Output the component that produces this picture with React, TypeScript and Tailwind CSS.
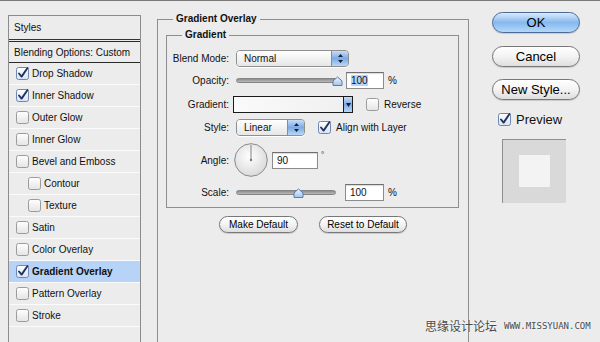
import React from 'react'

const styleItems = [
  { label: 'Drop Shadow', checked: true },
  { label: 'Inner Shadow', checked: true },
  { label: 'Outer Glow' },
  { label: 'Inner Glow' },
  { label: 'Bevel and Emboss' },
  { label: 'Contour', indent: true },
  { label: 'Texture', indent: true },
  { label: 'Satin' },
  { label: 'Color Overlay' },
  { label: 'Gradient Overlay', checked: true, selected: true },
  { label: 'Pattern Overlay' },
  { label: 'Stroke' },
]

function Defs() {
  return (
    <svg width="0" height="0" className="absolute">
      <defs>
        <linearGradient id="cbOff" x1="0" y1="0" x2="0" y2="1">
          <stop offset="0" stopColor="#ffffff" />
          <stop offset="1" stopColor="#e4e4e4" />
        </linearGradient>
        <linearGradient id="cbOn" x1="0" y1="0" x2="0" y2="1">
          <stop offset="0" stopColor="#ffffff" />
          <stop offset="1" stopColor="#d6e3f3" />
        </linearGradient>
        <linearGradient id="thumb" x1="0" y1="0" x2="0" y2="1">
          <stop offset="0" stopColor="#f4f8fd" />
          <stop offset="1" stopColor="#9fc2ec" />
        </linearGradient>
        <radialGradient id="dial" cx="0.45" cy="0.4" r="0.6">
          <stop offset="0" stopColor="#ffffff" />
          <stop offset="1" stopColor="#dadada" />
        </radialGradient>
      </defs>
    </svg>
  )
}

function Checkbox({ checked }: { checked?: boolean }) {
  return (
    <svg width="13" height="13" viewBox="0 0 13 13" className="shrink-0 overflow-visible">
      <rect x="0.5" y="0.5" width="12" height="12" rx="2" fill={checked ? 'url(#cbOn)' : 'url(#cbOff)'} stroke={checked ? '#6f86ad' : '#9b9b9b'} />
      {checked && <path d="M3 6.5 L5.6 9.6 L11.5 1" fill="none" stroke="#1f3363" strokeWidth="1.9" strokeLinecap="round" strokeLinejoin="round" />}
    </svg>
  )
}

function AquaSelect({ value, width }: { value: string; width: string }) {
  return (
    <div className={`${width} h-[17px] flex rounded-[4px] border border-[#8f8f8f] overflow-hidden shadow-[0_1px_0_#fff]`}>
      <div className="flex-1 bg-gradient-to-b from-white to-[#e6e6e6] pl-[7px] leading-[15px]">{value}</div>
      <div className="w-[17px] border-l border-[#6c8fc4] bg-gradient-to-b from-[#c8ddf6] via-[#7daae4] to-[#b9d7f7] flex items-center justify-center">
        <svg width="7" height="11" viewBox="0 0 7 11">
          <path d="M3.5 1 L6 4 H1 Z M3.5 10 L6 7 H1 Z" fill="#14213d" />
        </svg>
      </div>
    </div>
  )
}

function Slider({ width, thumb }: { width: string; thumb: number }) {
  return (
    <div className={`${width} h-[17px] relative flex items-center`}>
      <div className="w-full h-[5px] rounded-full bg-gradient-to-b from-[#8d8d8d] to-[#b9b9b9] border border-[#858585]" />
      <svg width="11" height="11" viewBox="0 0 11 11" className="absolute top-[4px]" style={{ left: thumb - 5 }}>
        <path d="M1 5 L5.5 1 L10 5 V9.5 H1 Z" fill="url(#thumb)" stroke="#5a7cae" strokeLinejoin="round" />
      </svg>
    </div>
  )
}

function Field({ children, width }: { children: React.ReactNode; width: string }) {
  return (
    <div className={`${width} h-[17px] bg-white border border-[#8c8c8c] border-t-[#6e6e6e] shadow-[inset_0_1px_1px_rgba(0,0,0,0.15)] pl-[4px] leading-[15px]`}>
      {children}
    </div>
  )
}

function Label({ children }: { children: React.ReactNode }) {
  return <div className="w-[62px] text-right shrink-0 mr-[7px]">{children}</div>
}

function PillButton({ children, width, primary, big }: { children: React.ReactNode; width: string; primary?: boolean; big?: boolean }) {
  const size = big ? 'h-[21px] text-[13px]' : 'h-[17px] text-[10px]'
  const skin = primary
    ? 'border-[#4c6a98] bg-gradient-to-b from-[#dcebfb] via-[#86b8ee] to-[#b4d8fa]'
    : 'border-[#777] bg-gradient-to-b from-white via-[#f3f3f3] to-[#dedede]'
  return (
    <div className={`${width} ${size} ${skin} rounded-full border flex items-center justify-center shadow-[0_1px_1px_rgba(0,0,0,0.15)] text-black`}>
      {children}
    </div>
  )
}

export default function App() {
  return (
    <div className="relative w-[600px] h-[342px] overflow-hidden bg-[#ececec] border-t border-[#7a7a7a] flex pl-[8px] text-[10px] text-[#111] font-['Liberation_Sans',Arial,sans-serif]">
      <Defs />

      {/* styles list */}
      <div className="mt-[14px] w-[133px] h-[360px] shrink-0 border border-[#8c8c8c] flex flex-col">
        <div className="h-[24px] border-b border-[#333] flex items-center pl-[5px]">Styles</div>
        <div className="h-[1px]" />
        <div className="h-[22px] border-t border-b border-[#2a2a2a] flex items-center pl-[5px]">Blending Options: Custom</div>
        {styleItems.map((item) => (
          <div
            key={item.label}
            className={`h-[22px] border-b border-[#fbfbfb] flex items-center gap-[3px] ${item.indent ? 'pl-[19px]' : 'pl-[7px]'} ${item.selected ? 'bg-[#b7d3f8] font-bold' : ''}`}
          >
            <Checkbox checked={item.checked} />
            <span>{item.label}</span>
          </div>
        ))}
        <div className="h-[22px] border-b border-[#fbfbfb]" />
      </div>

      {/* gradient overlay */}
      <fieldset className="ml-[16px] mt-[12px] w-[312px] h-[400px] shrink-0 border border-[#8e8e8e] px-[8px]">
        <legend className="ml-[7px] px-[3px] font-bold leading-[12px]">Gradient Overlay</legend>
        <fieldset className="mt-[4px] w-[293px] border border-[#8e8e8e] pb-[6px]">
          <legend className="ml-[15px] px-[3px] font-bold leading-[12px]">Gradient</legend>
          <div className="flex flex-col">
            <div className="mt-[9px] h-[17px] flex items-center">
              <Label>Blend Mode:</Label>
              <AquaSelect value="Normal" width="w-[113px]" />
            </div>
            <div className="mt-[5px] h-[17px] flex items-center">
              <Label>Opacity:</Label>
              <Slider width="w-[105px]" thumb={101} />
              <div className="ml-[5px]">
                <Field width="w-[38px]">
                  <span className="bg-[#b5d5ff]">100</span>
                </Field>
              </div>
              <span className="ml-[4px]">%</span>
            </div>
            <div className="mt-[7px] h-[17px] flex items-center">
              <div className="w-[62px] text-right shrink-0 mr-[4px]">Gradient:</div>
              <div className="w-[120px] h-[17px] flex border border-[#1a1a1a]">
                <div className="flex-1 bg-gradient-to-r from-[#fafafa] to-[#f0f0f0]" />
                <div className="w-[9px] border-l border-[#1a1a1a] bg-gradient-to-b from-[#c8ddf6] via-[#7daae4] to-[#b9d7f7] flex items-center justify-center">
                  <svg width="5" height="4" viewBox="0 0 5 4">
                    <path d="M0 0 H5 L2.5 4 Z" fill="#14213d" />
                  </svg>
                </div>
              </div>
              <div className="ml-[13px]">
                <Checkbox />
              </div>
              <span className="ml-[5px]">Reverse</span>
            </div>
            <div className="mt-[6px] h-[17px] flex items-center">
              <Label>Style:</Label>
              <AquaSelect value="Linear" width="w-[69px]" />
              <div className="ml-[13px]">
                <Checkbox checked />
              </div>
              <span className="ml-[5px]">Align with Layer</span>
            </div>
            <div className="mt-[7px] h-[34px] flex items-center">
              <div className="w-[62px] text-right shrink-0 mr-[5px]">Angle:</div>
              <svg width="34" height="34" viewBox="0 0 34 34" className="shrink-0">
                <circle cx="17" cy="17" r="16.3" fill="url(#dial)" stroke="#8a8a8a" />
                <line x1="17" y1="17" x2="17" y2="2" stroke="#777" strokeWidth="0.9" />
                <circle cx="17" cy="17" r="1.2" fill="#777" />
              </svg>
              <div className="ml-[4px]">
                <Field width="w-[46px]">90</Field>
              </div>
              <span className="ml-[3px] self-start mt-[6px] text-[8px]">°</span>
            </div>
            <div className="mt-[7px] h-[17px] flex items-center">
              <Label>Scale:</Label>
              <Slider width="w-[100px]" thumb={62} />
              <div className="ml-[9px]">
                <Field width="w-[39px]">100</Field>
              </div>
              <span className="ml-[4px]">%</span>
            </div>
          </div>
        </fieldset>
        <div className="mt-[8px] flex justify-center gap-[21px]">
          <PillButton width="w-[79px]">Make Default</PillButton>
          <PillButton width="w-[88px]">Reset to Default</PillButton>
        </div>
      </fieldset>

      {/* buttons column */}
      <div className="ml-[23px] w-[88px] shrink-0 flex flex-col items-start pt-[11px]">
        <PillButton width="w-[88px]" primary big>OK</PillButton>
        <div className="mt-[13px]">
          <PillButton width="w-[88px]" big>Cancel</PillButton>
        </div>
        <div className="mt-[12px]">
          <PillButton width="w-[88px]" big>New Style...</PillButton>
        </div>
        <div className="mt-[10px] ml-[6px] flex items-center gap-[5px] text-[13px]">
          <Checkbox checked />
          <span>Preview</span>
        </div>
        <div className="mt-[9px] ml-[10px] w-[64px] h-[64px] bg-[#d9d9d9] border-t border-l border-[#8f8f8f] flex items-center justify-center">
          <div className="w-[31px] h-[32px] bg-[#f3f3f3]" />
        </div>
      </div>

      <div className="absolute left-[425px] top-[317px] flex items-center gap-[7px] whitespace-nowrap text-[#4a4a4a] [text-shadow:0_0_2px_#fff]">
        <span className="text-[12px] leading-[16px] font-['Noto_Sans_CJK_SC',sans-serif]">思缘设计论坛</span>
        <span className="text-[9px] leading-[16px] font-['DejaVu_Sans_Mono',monospace]">WWW.MISSYUAN.COM</span>
      </div>
    </div>
  )
}
